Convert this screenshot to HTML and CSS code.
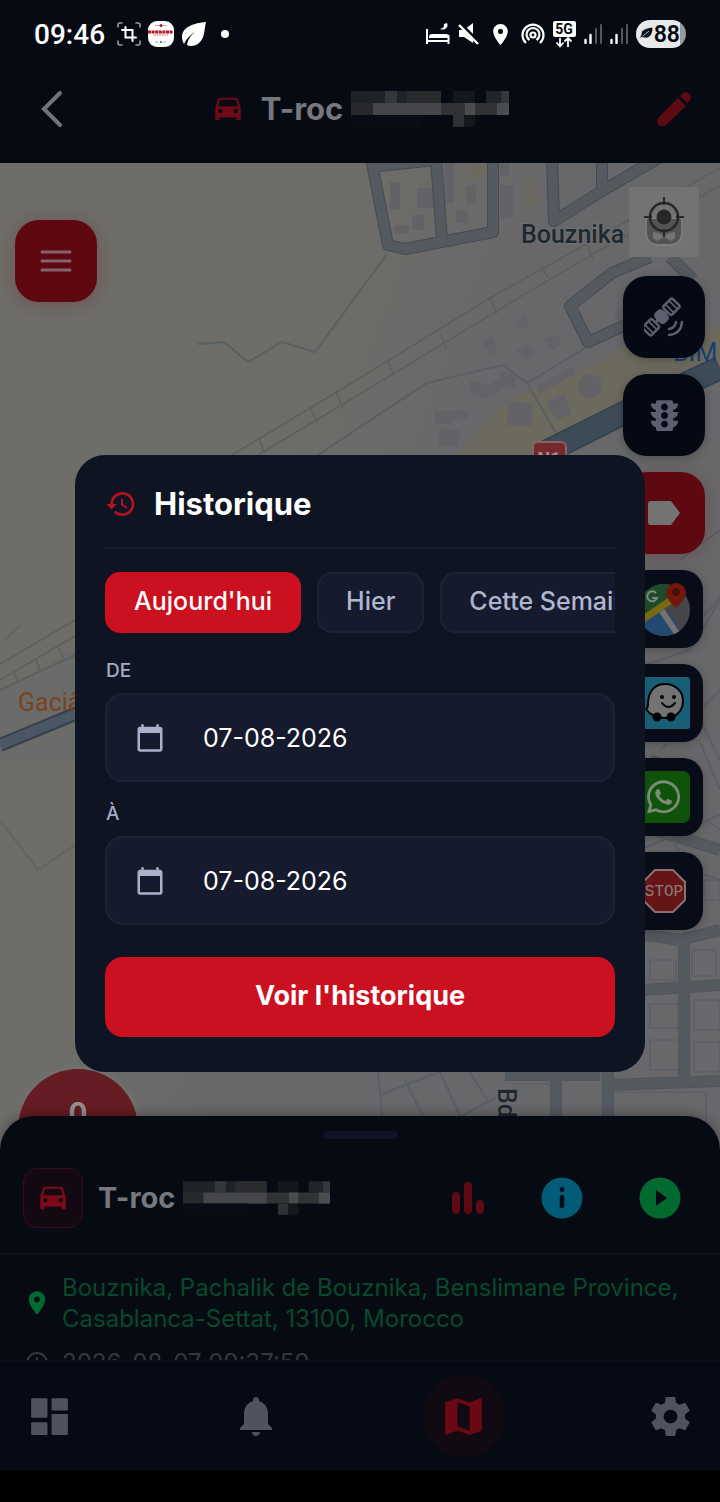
FILE: index.html
```
<!DOCTYPE html>
<html lang="fr">
<head>
  <meta charset="utf-8">
  <meta name="viewport" content="width=device-width, initial-scale=1">
  <title>T-roc - Historique</title>
  <link rel="stylesheet" href="styles.css">
</head>
<body>
  <!-- Shared icons -->
  <svg class="sprite" aria-hidden="true">
    <symbol id="car" viewBox="0 0 24 24">
      <path d="M18.92 5.01C18.72 4.42 18.16 4 17.5 4h-11c-.66 0-1.21.42-1.42 1.01L3 11v8c0 .55.45 1 1 1h1c.55 0 1-.45 1-1v-1h12v1c0 .55.45 1 1 1h1c.55 0 1-.45 1-1v-8l-2.08-5.99zM6.5 15c-.83 0-1.5-.67-1.5-1.5S5.67 12 6.5 12s1.5.67 1.5 1.5S7.33 15 6.5 15zm11 0c-.83 0-1.5-.67-1.5-1.5s.67-1.5 1.5-1.5 1.5.67 1.5 1.5-.67 1.5-1.5 1.5zM5 10l1.5-4.5h11L19 10H5z"/>
    </symbol>
    <symbol id="pin" viewBox="0 0 24 24">
      <path d="M12 2C8.13 2 5 5.13 5 9c0 5.25 7 13 7 13s7-7.75 7-13c0-3.87-3.13-7-7-7zm0 9.5c-1.38 0-2.5-1.12-2.5-2.5s1.12-2.5 2.5-2.5 2.5 1.12 2.5 2.5-1.12 2.5-2.5 2.5z"/>
    </symbol>
    <symbol id="calendar" viewBox="0 0 24 24">
      <path d="M20 3h-1V1h-2v2H7V1H5v2H4c-1.1 0-2 .9-2 2v16c0 1.1.9 2 2 2h16c1.1 0 2-.9 2-2V5c0-1.1-.9-2-2-2zm0 18H4V8h16v13z"/>
    </symbol>
    <symbol id="signal" viewBox="0 0 18 20">
      <path d="M1.5 16v3M6.5 11v8" stroke="#fff" stroke-width="2.4" stroke-linecap="round"/>
      <path d="M12 5v14M17 1v18" stroke="#55585f" stroke-width="2" stroke-linecap="round"/>
    </symbol>
    <symbol id="mask" viewBox="0 0 158 36">
      <path d="M0 0h90v12H0z" fill="#1f2227"/>
      <path d="M34 0h12v12H34zM150 0h8v12h-8z" fill="#36373b"/>
      <path d="M56 0h34v12H56z" fill="#292b2f"/>
      <path d="M102 0h22v12h-22z" fill="#14171d"/>
      <path d="M135 0h15v12h-15z" fill="#222429"/>
      <path d="M0 12h158v12H0z" fill="#303236"/>
      <path d="M0 12h22v12H0z" fill="#26282c"/>
      <path d="M22 12h68v12H22z" fill="#45464a"/>
      <path d="M114 12h10v12h-10zM146 12h12v12h-12z" fill="#4b4c50"/>
      <path d="M102 24h22v12h-22z" fill="#14171c"/>
      <path d="M102 24h11v12h-11z" fill="#2f3135"/>
      <path d="M0 24h70v12H0z" fill="#080c14"/>
    </symbol>
  </svg>

  <!-- Phone status bar -->
  <div class="status-bar">
    <div class="status-left">
      <span class="clock">09:46</span>
      <svg width="24" height="24" viewBox="0 0 24 24" fill="none" stroke-linecap="round">
        <path d="M1 5V3q0-2 2-2h2M19 1h2q2 0 2 2v2M23 19v2q0 2-2 2h-2M5 23H3q-2 0-2-2v-2" stroke="#9a9ca0" stroke-width="1.6"/>
        <path d="M5 8h10.500v11M8.500 5v10.500H19" stroke="#fff" stroke-width="2"/>
      </svg>
      <svg width="26" height="26" viewBox="0 0 26 26">
        <rect width="26" height="26" rx="9" fill="#fff"/>
        <path d="M7 4.500h4M15 4.500h4M7 21h3M15 21h3" stroke="#999" stroke-width=".8"/>
        <circle cx="13" cy="4.500" r="1.600" fill="#b01824"/>
        <circle cx="13" cy="21" r="1" fill="#555"/>
        <path d="M0 11h25" stroke="#b01824" stroke-width="3" stroke-dasharray="3 .6"/>
        <path d="M6 14h14" stroke="#d86b73" stroke-width="1.200" stroke-dasharray="2 .6"/>
      </svg>
      <svg width="26" height="26" viewBox="0 0 26 26">
        <path d="M25 1C13 2 1 6 1 16c0 3 1 5 2 7C5 18 9 14 15 10 10 14 7 18 6 24c3 2 9 1 12-2 6-5 5-13 7-21z" fill="#fff"/>
      </svg>
      <span class="more-dot"></span>
    </div>
    <div class="status-right">
      <svg width="24" height="22" viewBox="0 0 24 22" fill="none" stroke="#fff" stroke-width="2">
        <path d="M1 6v15M1 18h21.500M22.500 12v9"/>
        <path d="M3 15v-1q0-3 3-3h14q3 0 3 3v1z" fill="#fff" stroke="none"/>
        <path d="M18 1c0 4-1 4-4 5 5 2 9-2 7-6" fill="#fff" stroke="none"/>
      </svg>
      <svg width="22" height="22" viewBox="0 0 22 22">
        <path d="M1 7h5l9-7v20l-9-6H1z" fill="#fff"/>
        <path d="M2 0l20 20" stroke="#060a13" stroke-width="3"/>
        <path d="M1 2l19 19" stroke="#fff" stroke-width="2.400"/>
      </svg>
      <svg width="25" height="25" fill="#fff"><use href="#pin"/></svg>
      <svg width="24" height="22" viewBox="0 0 24 22" fill="none" stroke="#fff" stroke-width="2.200">
        <path d="M5 20a10.500 10.500 0 1 1 14 0M8.500 17a6.500 6.500 0 1 1 7 0"/>
        <circle cx="12" cy="12" r="2.500"/>
      </svg>
      <svg width="23" height="27" viewBox="0 0 23 27">
        <rect x="0" y="0" width="23" height="16" rx="2" fill="#fff"/>
        <text x="11" y="13" text-anchor="middle" class="net">5G</text>
        <path d="M7 17v8M3.500 21.500 7 25.500l3.500-4M15 26v-9M11.500 20.500 15 17l3.500 3.500" fill="none" stroke="#fff" stroke-width="1.800"/>
      </svg>
      <svg width="18" height="20"><use href="#signal"/></svg>
      <svg width="18" height="20"><use href="#signal"/></svg>
      <span class="battery">
        <svg width="15" height="14" viewBox="0 0 15 14"><path d="M14 0C8 1 2 2 2 8l-2 4 3-2c5 3 11 0 11-10zM4 9l6-5" fill="#060a13" stroke="#e8e9eb" stroke-width=".8"/></svg>88
      </span>
    </div>
  </div>

  <!-- App header -->
  <header class="top-bar">
    <button type="button" class="icon-button" aria-label="Retour">
      <svg width="24" height="38" viewBox="0 0 24 38"><path d="M20 3 4 19l16 16" fill="none" stroke="#727378" stroke-width="4" stroke-linecap="round"/></svg>
    </button>
    <h1 class="device-title">
      <svg class="car-icon" width="34" height="34"><use href="#car"/></svg>
      <span>T-roc</span>
      <svg width="158" height="36"><use href="#mask"/></svg>
    </h1>
    <button type="button" class="icon-button" aria-label="Modifier">
      <svg width="36" height="36" viewBox="0 0 36 36" fill="#5e0a13">
        <path d="M2 27 22 7l8 8L10 34q-3 2-6 1-4-2-2-8z"/>
        <path d="m24 5 3-3q3-2 5 0l2 2q2 3 0 5l-3 3z"/>
      </svg>
    </button>
  </header>

  <!-- Map -->
  <main class="map">
    <svg class="map-tiles" viewBox="0 163 720 987" preserveAspectRatio="xMidYMin slice" aria-hidden="true">
      <defs>
        <linearGradient id="ground" x1="0" y1="0" x2="1" y2="0.5">
          <stop offset="0.4" stop-color="#6e6d68"/>
          <stop offset="0.62" stop-color="#68686a"/>
        </linearGradient>
      </defs>
      <rect y="163" width="720" height="987" fill="url(#ground)"/>
      <path d="M0 690 75 650V760H0z" fill="#6b6b69"/>
      <path d="M450 460 510 398 580 372 640 338 720 326V372L560 445 540 470z" fill="#6c695e"/>

      <!-- buildings -->
      <g fill="#636367">
        <path d="M390 182h10v28h-10zM417 188h18v20h-18zM444 163h10v40h-10zM466 185h10v18h-10zM500 185h14v33h-14zM456 210h12v13h-12zM395 225h14v9h-14zM500 163h9v13h-9zM412 215h12v15h-12z"/>
        <path d="M470 380l18 6 10-8 2 14-14 6-16-4zM435 411h32v8h-14v5h-18zM440 428l20 2-2 16-20-1zM509 401l24 3-2 22-24-1zM500 370l16 4-1 16-16-4zM546 402l18-8 8 20-16 6z"/>
        <path d="M535 387 572 367 576 374 540 393zM516 350l12-6 8 10-10 6zM543 340l12-6 8 10-10 6zM482 343l10-8 6 18-6 2zM515 322l10-6 4 10-8 4zM615 312l12-8v10l-10 8z"/>
        <circle cx="590" cy="386" r="12"/>
      </g>
      <path d="M466 165h22v14h-16zM525 177h12v28h-12z" fill="#6c695f"/>

      <!-- streets -->
      <g fill="none" stroke="#464a52" stroke-width="12" stroke-linejoin="round">
        <path d="M371 158 388 245 405 249 493 232V158M370 167 435 160M436 160 442 240"/>
        <path d="M552 158 554 221 602 191 662 156M602 158V190"/>
        <path d="M650 257 612 273 570 306 588 342 632 322M670 257 693 280"/>
      </g>
      <g fill="none" stroke="#51555b" stroke-width="12" stroke-linejoin="round">
        <path d="M640 934 680 940 720 930M556 1060V1150M608 1060V1150M505 1075H600M610 1085 720 1081M640 990 720 985M684 934V1080M655 830 720 850M650 760 692 780"/>
      </g>
      <g fill="none" stroke="#555a60" stroke-width="10" stroke-linejoin="round">
        <path d="M371 158 388 245 405 249 493 232V158M370 167 435 160M436 160 442 240"/>
        <path d="M552 158 554 221 602 191 662 156M602 158V190"/>
        <path d="M650 257 612 273 570 306 588 342 632 322M670 257 693 280"/>
        <path d="M640 934 680 940 720 930M556 1060V1150M608 1060V1150M505 1075H600M610 1085 720 1081M640 990 720 985M684 934V1080M655 830 720 850M650 760 692 780"/>
      </g>
      <g fill="none" stroke="#595f62" stroke-width="2">
        <path d="M198 344 224 342 248 362 282 342 315 352 387 254M315 457 360 427 427 383 503 365 527 383 587 347M527 383 560 440"/>
        <path d="M378 1072 382 1116M382 1094 445 1070M405 1080 425 1120M440 1072 462 1120M470 1072 488 1102M462 1116 495 1098"/>
        <path d="M680 560 720 530M700 620l20-22M645 665 690 650 720 600M660 750 720 690M690 700 720 760M700 742 720 790M640 850 720 815M660 820 690 870 720 880"/>
        <path d="M0 690 75 655"/>
      </g>
      <path d="M0 820 38 870 75 845M5 640 20 625" fill="none" stroke="#63645f" stroke-width="2"/>
      <g fill="none" stroke="#565a63" stroke-width="1">
        <path d="M650 960h26v20h-26zM692 950h24v26h-24zM650 1004h28v24h-28zM694 1000h26v30h-26zM650 1040h30v30h-30zM694 1042h26v30h-26zM514 1084h38v40M570 1074h32v50M616 1092h90v40M690 500l12 16M694 520l12 16M700 360l14 20M704 880h16v20h-16zM706 820l14 10"/>
      </g>

      <!-- railway -->
      <g fill="none" stroke="#5e5e5c" stroke-width="1.500">
        <path d="M232 455 360 378 490 298 567 255 720 168M258 455 360 394 520 297 600 250 720 186"/>
        <path d="M258 437l7 16M310 407l7 16M336 392l7 16M388 361l7 16M440 332l6 16M490 298l7 16M541 266l7 12M586 243l7 16"/>
        <path d="M0 680 75 636M0 664 75 620M14 672l5 12M36 660l5 12M58 646l5 12"/>
      </g>

      <!-- main road -->
      <path d="M0 745 80 712" stroke="#363f4b" stroke-width="14"/>
      <path d="M0 745 80 712" stroke="#4b5765" stroke-width="10"/>
      <path d="M540 455 640 405 720 368" fill="none" stroke="#323f4d" stroke-width="24"/>
      <path d="M540 455 640 405 720 368" fill="none" stroke="#3e4b59" stroke-width="21"/>

      <rect x="533" y="442" width="33" height="26" rx="5" fill="#752b2e" stroke="#8b6163" stroke-width="2"/>
      <text x="549" y="465" text-anchor="middle" class="shield">N1</text>
      <text x="521" y="243" class="town">Bouznika</text>
      <text x="673" y="361" class="shop">BIM</text>
      <text x="18" y="711" class="place">Gaciâ</text>
      <text transform="translate(498 1088) rotate(90)" class="town">Bd</text>
    </svg>

    <button type="button" class="tool tool-red menu-button" aria-label="Menu">
      <svg width="32" height="24" viewBox="0 0 32 24"><path d="M2 3h28M2 12h28M2 21h28" stroke="#80656a" stroke-width="3" stroke-linecap="round"/></svg>
    </button>

    <div class="map-tools">
      <button type="button" class="locate" aria-label="Ma position">
        <svg width="40" height="52" viewBox="0 0 40 52">
          <path d="M2 22h36v14q0 13-13 13H15Q2 49 2 36z" fill="#535354" stroke="#7b7b7c" stroke-width="2"/>
          <path d="M9 36l6 1 5 3 5-3 6-1v6l-4 3-7-4-7 4-4-3z" fill="#737374"/>
          <circle cx="20" cy="21" r="14" fill="none" stroke="#272727" stroke-width="2.500"/>
          <circle cx="20" cy="21" r="7.500" fill="#272727"/>
          <path d="M20 1v8M20 33v8M0 21h8M32 21h8" stroke="#272727" stroke-width="2"/>
        </svg>
      </button>
      <button type="button" class="tool" aria-label="Vue satellite">
        <svg width="40" height="40" viewBox="0 0 40 40" fill="none" stroke="#5b5f6e" stroke-width="2.500">
          <g transform="rotate(-45 20 20)">
            <rect x="-3" y="12" width="13" height="12" rx="2"/>
            <path d="M1 12v12M6 12v12M30 12v12M35 12v12" stroke-width="1.800"/>
            <rect x="26" y="12" width="13" height="12" rx="2"/>
            <path d="M11 18h15" stroke-width="3"/>
            <rect x="14" y="12" width="9" height="12" rx="3" fill="#5b5f6e"/>
          </g>
          <path d="M25 32q6-1 7-7M25 38q12-1 13-13" stroke-linecap="round"/>
        </svg>
      </button>
      <button type="button" class="tool" aria-label="Trafic">
        <svg width="41" height="41" viewBox="0 0 24 24" fill="#5b5f6e"><path d="M20 10h-3V8.860c1.720-.45 3-2 3-3.860h-3V4c0-.55-.45-1-1-1H8c-.55 0-1 .45-1 1v1H4c0 1.860 1.280 3.410 3 3.860V10H4c0 1.860 1.280 3.410 3 3.860V15H4c0 1.860 1.280 3.410 3 3.860V20c0 .55.45 1 1 1h8c.55 0 1-.45 1-1v-1.140c1.720-.45 3-2 3-3.860h-3v-1.140c1.720-.45 3-2 3-3.860zm-8 9c-1.110 0-2-.9-2-2s.89-2 2-2c1.100 0 2 .9 2 2s-.89 2-2 2zm0-5c-1.110 0-2-.9-2-2s.89-2 2-2c1.100 0 2 .9 2 2s-.89 2-2 2zm0-5c-1.110 0-2-.9-2-2 0-1.110.89-2 2-2 1.100 0 2 .89 2 2 0 1.100-.89 2-2 2z"/></svg>
      </button>
      <button type="button" class="tool tool-red" aria-label="Étiquettes">
        <svg width="34" height="26" viewBox="0 0 34 26"><path d="M4 1h20l9 12-9 12H4q-3 0-3-3V4q0-3 3-3z" fill="#737374"/></svg>
      </button>
      <button type="button" class="tool tool-app" aria-label="Google Maps">
        <svg width="52" height="54" viewBox="0 0 52 54">
          <defs><clipPath id="disc"><circle cx="26" cy="28" r="26"/></clipPath></defs>
          <g clip-path="url(#disc)">
            <path d="M0 0h52v54H0z" fill="#45454a"/>
            <path d="M0 0h52L0 44z" fill="#1d4a2b"/>
            <path d="M0 42 26 24 46 54H0z" fill="#22496f"/>
            <path d="M22 26 42 56" stroke="#737374" stroke-width="6"/>
            <path d="M-2 42 42 12" stroke="#7a6814" stroke-width="7"/>
          </g>
          <path d="M18 11a5 5 0 1 0 1 5h-5" fill="none" stroke="#7d8a80" stroke-width="2"/>
          <path d="M38 26Q28 17 28 11a10 10 0 0 1 20 0q0 6-10 15z" fill="#73180c"/>
          <circle cx="38" cy="10" r="4" fill="#4c0d08"/>
        </svg>
      </button>
      <button type="button" class="tool tool-app" aria-label="Waze">
        <svg width="52" height="52" viewBox="0 0 52 52">
          <rect width="52" height="52" rx="3" fill="#185e76"/>
          <path d="M10 27C10 14 17 7 27 7s18 7 18 17-7 17-18 17c-9 0-15-3-19-9 2-1 2-3 2-5z" fill="#737374" stroke="#020202" stroke-width="2"/>
          <circle cx="24" cy="20" r="2" fill="#020202"/>
          <circle cx="36" cy="20" r="2" fill="#020202"/>
          <path d="M24 26q6 8 13 0" fill="none" stroke="#020202" stroke-width="2" stroke-linecap="round"/>
          <circle cx="19" cy="40" r="4.500" fill="#020202"/>
          <circle cx="33" cy="40" r="4.500" fill="#020202"/>
        </svg>
      </button>
      <button type="button" class="tool tool-app" aria-label="WhatsApp">
        <svg width="52" height="52" viewBox="0 0 52 52">
          <rect width="52" height="52" rx="7" fill="#0f5209"/>
          <path transform="translate(9 7) scale(.074)" fill="#7b8a79" d="M380.900 97.100C339 55.100 283.200 32 223.900 32c-122.400 0-222 99.600-222 222 0 39.100 10.200 77.300 29.600 111L0 480l117.700-30.900c32.400 17.700 68.900 27 106.100 27h.1c122.300 0 224.100-99.600 224.100-222 0-59.300-25.200-115-67.100-157zm-157 341.600c-33.200 0-65.700-8.900-94-25.700l-6.700-4-69.800 18.300L72 359.200l-4.400-7c-18.500-29.400-28.200-63.300-28.200-98.200 0-101.700 82.800-184.500 184.600-184.500 49.300 0 95.600 19.200 130.400 54.100 34.800 34.900 56.200 81.200 56.100 130.500 0 101.800-84.900 184.600-186.600 184.600zm101.200-138.200c-5.500-2.800-32.800-16.200-37.900-18-5.100-1.900-8.800-2.800-12.500 2.800-3.700 5.600-14.300 18-17.600 21.800-3.200 3.700-6.500 4.200-12 1.400-32.600-16.300-54-29.100-75.500-66-5.700-9.800 5.700-9.100 16.300-30.300 1.800-3.700.9-6.900-.5-9.700-1.400-2.800-12.500-30.100-17.100-41.200-4.500-10.800-9.100-9.300-12.500-9.500-3.200-.2-6.900-.2-10.600-.2-3.700 0-9.700 1.400-14.800 6.900-5.100 5.600-19.400 19-19.400 46.300 0 27.300 19.900 53.700 22.600 57.400 2.800 3.700 39.100 59.700 94.800 83.800 35.200 15.200 49 16.500 66.600 13.900 10.700-1.600 32.800-13.400 37.400-26.400 4.600-13 4.600-24.100 3.200-26.400-1.300-2.500-5-3.900-10.500-6.600z"/>
        </svg>
      </button>
      <button type="button" class="tool tool-app" aria-label="Arrêt">
        <svg width="46" height="46" viewBox="0 0 46 46">
          <path d="M14 2h18l12 12v18L32 44H14L2 32V14z" fill="#651515" stroke="#8b7070" stroke-width="2"/>
          <text x="23" y="28" text-anchor="middle" class="stop">STOP</text>
        </svg>
      </button>
    </div>

    <div class="speed">0</div>
  </main>

  <!-- Vehicle sheet -->
  <section class="sheet">
    <div class="handle"></div>
    <div class="vehicle">
      <span class="vehicle-icon"><svg class="car-icon" width="34" height="34"><use href="#car"/></svg></span>
      <h2 class="vehicle-name">T-roc <svg width="147" height="34"><use href="#mask"/></svg></h2>
      <div class="vehicle-actions">
        <button type="button" class="icon-button" aria-label="Statistiques">
          <svg width="34" height="34" viewBox="0 0 34 34"><path d="M5 15v14M17 5v24M29 23v6" stroke="#5e0a13" stroke-width="8" stroke-linecap="round"/></svg>
        </button>
        <button type="button" class="icon-button" aria-label="Informations">
          <svg width="42" height="42" viewBox="0 0 42 42"><circle cx="21" cy="21" r="20.500" fill="#025c78"/><path d="M21 20v9" stroke="#060a13" stroke-width="4.500" stroke-linecap="round"/><circle cx="21" cy="12.500" r="2.400" fill="#060a13"/></svg>
        </button>
        <button type="button" class="icon-button" aria-label="Lecture">
          <svg width="42" height="42" viewBox="0 0 42 42"><circle cx="21" cy="21" r="20.500" fill="#02692f"/><path d="M17 13v16l11-8z" fill="#060a13"/></svg>
        </button>
      </div>
    </div>
    <div class="detail address">
      <svg width="28" height="28"><use href="#pin"/></svg>
      <p>Bouznika, Pachalik de Bouznika, Benslimane Province, Casablanca-Settat, 13100, Morocco</p>
    </div>
    <div class="detail date">
      <svg width="22" height="22" viewBox="0 0 22 22" fill="none" stroke="#35373c" stroke-width="2"><circle cx="11" cy="11" r="10"/><path d="M11 5v7l4 3"/></svg>
      <p>2026-08-07 09:37:59</p>
    </div>
  </section>

  <nav class="bottom-nav">
    <a href="#" aria-label="Tableau de bord">
      <svg width="49" height="49" viewBox="0 0 24 24"><rect x="3" y="3" width="8" height="9.600" rx=".6"/><rect x="13" y="3" width="8" height="6" rx=".6"/><rect x="3" y="14.800" width="8" height="6.200" rx=".6"/><rect x="13" y="10.800" width="8" height="10.200" rx=".6"/></svg>
    </a>
    <a href="#" aria-label="Notifications">
      <svg width="48" height="48" viewBox="0 0 24 24"><path d="M12 22c1.100 0 2-.9 2-2h-4c0 1.100.89 2 2 2zm6-6v-5c0-3.070-1.640-5.640-4.500-6.320V4c0-.83-.67-1.500-1.500-1.500s-1.500.67-1.500 1.500v.68C7.630 5.360 6 7.920 6 11v5l-2 2v1h16v-1l-2-2z"/></svg>
    </a>
    <a href="#" class="active" aria-label="Carte">
      <svg width="49" height="49" viewBox="0 0 24 24"><path d="M20.500 3l-.16.030L15 5.100 9 3 3.360 4.900c-.21.070-.36.250-.36.480V20.500c0 .28.220.5.500.5l.16-.030L9 18.900l6 2.100 5.640-1.900c.21-.070.36-.25.36-.48V3.500c0-.28-.22-.5-.5-.5zM15 19l-6-2.110V5l6 2.110V19z"/></svg>
    </a>
    <a href="#" aria-label="Paramètres">
      <svg width="47" height="47" viewBox="0 0 24 24"><path d="M19.430 12.980c.04-.32.070-.64.070-.98s-.03-.66-.07-.98l2.110-1.650c.19-.15.240-.42.120-.64l-2-3.460c-.12-.22-.39-.3-.61-.22l-2.490 1c-.52-.4-1.080-.73-1.690-.98l-.38-2.650C14.460 2.180 14.250 2 14 2h-4c-.25 0-.46.180-.49.420l-.38 2.650c-.61.250-1.170.590-1.690.98l-2.490-1c-.23-.09-.49 0-.61.220l-2 3.460c-.13.220-.07.490.120.640l2.110 1.650c-.04.320-.07.650-.07.980s.03.660.070.980l-2.110 1.650c-.19.150-.24.420-.12.640l2 3.460c.12.220.39.300.61.220l2.490-1c.52.400 1.080.730 1.690.980l.38 2.650c.03.240.24.420.49.420h4c.25 0 .46-.18.490-.42l.38-2.650c.61-.25 1.170-.59 1.690-.98l2.490 1c.23.090.49 0 .61-.22l2-3.460c.12-.22.070-.49-.12-.64l-2.110-1.650zM12 15.500c-1.930 0-3.500-1.570-3.500-3.500s1.570-3.500 3.500-3.500 3.500 1.570 3.500 3.500-1.570 3.500-3.500 3.500z"/></svg>
    </a>
  </nav>
  <div class="system-bar"></div>

  <!-- History dialog -->
  <div class="overlay">
    <form class="dialog" role="dialog" aria-labelledby="dialogTitle">
      <h2 class="dialog-title" id="dialogTitle">
        <svg width="32" height="32" viewBox="0 0 24 24" fill="#b5121f"><path d="M13 3c-4.970 0-9 4.030-9 9H1l3.890 3.890.070.140L9 12H6c0-3.870 3.130-7 7-7s7 3.130 7 7-3.130 7-7 7c-1.930 0-3.680-.79-4.940-2.060l-1.420 1.420C8.270 19.990 10.510 21 13 21c4.970 0 9-4.030 9-9s-4.030-9-9-9zm-1 5v5l4.280 2.540.72-1.210-3.500-2.080V8H12z"/></svg>
        Historique
      </h2>
      <div class="chips">
        <button type="button" class="chip selected">Aujourd'hui</button>
        <button type="button" class="chip">Hier</button>
        <button type="button" class="chip">Cette Semaine</button>
      </div>
      <div class="field-group">
        <label for="dateFrom">DE</label>
        <div class="field">
          <svg width="30" height="30" fill="#a9b1cb"><use href="#calendar"/></svg>
          <input type="text" id="dateFrom" value="07-08-2026">
        </div>
      </div>
      <div class="field-group">
        <label for="dateTo">À</label>
        <div class="field">
          <svg width="30" height="30" fill="#a9b1cb"><use href="#calendar"/></svg>
          <input type="text" id="dateTo" value="07-08-2026">
        </div>
      </div>
      <button type="button" class="submit">Voir l'historique</button>
    </form>
  </div>
</body>
</html>
```
FILE: styles.css
```
/* Base */
* {
  box-sizing: border-box;
}

body {
  margin: 0;
  min-height: 100vh;
  display: flex;
  flex-direction: column;
  background-color: #060a13;
  color: #77787d;
  font-family: 'Inter', 'Liberation Sans', sans-serif;
}

h1, h2, p {
  margin: 0;
}

svg {
  display: block;
  flex: none;
}

button, input {
  font-family: inherit;
}

button {
  border: none;
  padding: 0;
  cursor: pointer;
}

.sprite {
  position: absolute;
  width: 0;
  height: 0;
}

.icon-button {
  background: none;
}

.car-icon {
  fill: #6e0a15;
}

/* Status bar */
.status-bar {
  display: flex;
  justify-content: space-between;
  align-items: center;
  height: 68px;
  padding: 0 34px;
  color: #fff;
}

.status-left, .status-right {
  display: flex;
  align-items: center;
}

.status-left {
  gap: 7px;
}

.status-right {
  gap: 8px;
}

.clock {
  font-family: 'Roboto', sans-serif;
  font-size: 28px;
  font-weight: 500;
  margin-right: 5px;
}

.more-dot {
  width: 8px;
  height: 8px;
  margin-left: 7px;
  border-radius: 50%;
  background-color: #fff;
}

.net {
  font: bold 14px 'Roboto', sans-serif;
  fill: #060a13;
}

.battery {
  display: flex;
  align-items: center;
  height: 28px;
  padding: 0 6px 0 3px;
  border-radius: 14px;
  background: linear-gradient(90deg, #e8e9eb 88%, #96989c 88%);
  color: #060a13;
  font-family: 'Roboto', sans-serif;
  font-size: 23px;
  font-weight: 600;
}

/* Header */
.top-bar {
  display: flex;
  justify-content: space-between;
  align-items: center;
  height: 95px;
  padding: 0 28px 14px 40px;
}

.device-title {
  display: flex;
  align-items: center;
  gap: 8px;
  font-size: 31px;
  font-weight: 700;
  line-height: 36px;
}

.device-title .car-icon {
  margin-right: 8px;
}

/* Map */
.map {
  position: relative;
  flex: 1;
  min-height: 820px;
  overflow: hidden;
  background-color: #6e6d68;
}

.map-tiles {
  position: absolute;
  width: 100%;
  height: 100%;
}

.town, .place, .shop {
  font-family: 'Roboto', sans-serif;
  font-size: 25px;
}

.town {
  font-weight: 500;
  fill: #20282f;
  stroke: #707070;
  stroke-width: 2px;
  paint-order: stroke;
}

.place {
  fill: #7a431c;
}

.shop {
  fill: #173f70;
}

.shield {
  font: bold 18px 'Roboto', sans-serif;
  fill: #a39092;
}

.stop {
  font: 16px 'Liberation Mono', monospace;
  fill: #8f7c7c;
}

.tool {
  display: flex;
  justify-content: center;
  align-items: center;
  width: 82px;
  height: 82px;
  border-radius: 24px;
  background-color: #050914;
  box-shadow: 0 2px 10px rgba(0, 0, 0, 0.25);
}

.tool-red {
  background-color: #5e0811;
  box-shadow: 0 2px 16px rgba(110, 20, 30, 0.3);
}

.tool-app {
  width: 78px;
  height: 78px;
  border-radius: 20px;
  background-color: #080b18;
}

.menu-button {
  position: absolute;
  top: 57px;
  left: 15px;
}

.map-tools {
  position: absolute;
  top: 24px;
  right: 15px;
  display: flex;
  flex-direction: column;
  align-items: center;
  gap: 16px;
}

.locate {
  display: flex;
  justify-content: center;
  align-items: center;
  width: 70px;
  height: 70px;
  margin-bottom: 3px;
  background-color: #737374;
}

.speed {
  position: absolute;
  left: 18px;
  bottom: -39px;
  width: 120px;
  height: 120px;
  border-radius: 50%;
  background-color: #651c22;
  box-shadow: 0 0 4px 3px #727270;
  color: #969293;
  font-size: 28px;
  font-weight: 700;
  line-height: 88px;
  text-align: center;
}

/* Vehicle sheet */
.sheet {
  position: relative;
  margin-top: -34px;
  padding-top: 15px;
  border-radius: 34px 34px 0 0;
  background-color: #060a13;
  box-shadow: 0 -2px 12px rgba(0, 0, 0, 0.3);
}

.handle {
  width: 75px;
  height: 8px;
  margin: 0 auto;
  border-radius: 4px;
  background-color: #0e1224;
}

.vehicle {
  display: flex;
  align-items: center;
  gap: 15px;
  padding: 29px 39px 25px 23px;
  border-bottom: 2px solid #0b0f1a;
}

.vehicle-icon {
  display: flex;
  justify-content: center;
  align-items: center;
  width: 60px;
  height: 60px;
  border: 1px solid #3a0c17;
  border-radius: 14px;
  background-color: #140912;
}

.vehicle-icon .car-icon {
  fill: #7d0a17;
}

.vehicle-name {
  display: flex;
  align-items: center;
  gap: 8px;
  font-size: 29px;
  font-weight: 700;
  line-height: 36px;
}

.vehicle-actions {
  display: flex;
  align-items: center;
  gap: 56px;
  margin-left: auto;
}

.detail {
  display: flex;
  align-items: center;
  padding: 0 16px 0 23px;
  font-size: 24px;
  line-height: 31px;
}

.address {
  gap: 11px;
  padding-top: 17px;
  color: #08492a;
}

.address svg {
  fill: #026a30;
}

.date {
  gap: 14px;
  padding-top: 13px;
  padding-left: 26px;
  color: #35373c;
}

/* Bottom navigation */
.bottom-nav {
  position: relative;
  display: flex;
  justify-content: space-between;
  align-items: center;
  height: 110px;
  margin-top: -18px;
  padding: 0 8px;
  border-top: 2px solid #0a0e1a;
  background-color: #060a14;
}

.bottom-nav a {
  display: flex;
  justify-content: center;
  align-items: center;
  width: 82px;
  height: 82px;
  border-radius: 50%;
}

.bottom-nav svg {
  fill: #50535e;
}

.bottom-nav .active {
  background-color: #120a12;
}

.bottom-nav .active svg {
  fill: #6a0913;
}

.system-bar {
  height: 32px;
  background-color: #000;
}

/* History dialog */
.overlay {
  position: fixed;
  top: 25px;
  right: 0;
  bottom: 0;
  left: 0;
  display: flex;
  justify-content: center;
  align-items: center;
  padding: 0 75px;
}

.dialog {
  width: 100%;
  padding: 30px 30px 35px;
  border-radius: 30px;
  background-color: #0f1423;
}

.dialog-title {
  display: flex;
  align-items: center;
  gap: 17px;
  padding-bottom: 24px;
  border-bottom: 2px solid #1a2031;
  color: #fff;
  font-size: 31px;
  font-weight: 700;
  line-height: 38px;
}

.chips {
  display: flex;
  gap: 16px;
  margin: 23px 0 28px;
  overflow: hidden;
}

.chip {
  flex: none;
  height: 61px;
  padding: 0 27px 3px;
  border: 2px solid #1c2337;
  border-radius: 15px;
  background-color: #151a2c;
  color: #aeb6d0;
  font-size: 25px;
  font-weight: 500;
}

.chip.selected {
  border-color: #cb1020;
  background-color: #cb1020;
  color: #fff;
}

.field-group {
  margin-bottom: 22px;
}

.field-group label {
  display: block;
  margin-bottom: 12px;
  padding-left: 1px;
  color: #a4abc3;
  font-size: 19px;
  font-weight: 500;
  line-height: 20px;
}

.field {
  display: flex;
  align-items: center;
  gap: 38px;
  height: 89px;
  padding: 0 28px;
  border: 2px solid #1c2337;
  border-radius: 18px;
  background-color: #151a2c;
}

.field input {
  flex: 1;
  min-width: 0;
  padding: 0;
  border: none;
  background: none;
  color: #fff;
  font-size: 25px;
}

.submit {
  display: block;
  width: 100%;
  height: 80px;
  margin-top: 32px;
  padding-bottom: 4px;
  border-radius: 18px;
  background-color: #cb1020;
  color: #fff;
  font-size: 27px;
  font-weight: 700;
}
```
